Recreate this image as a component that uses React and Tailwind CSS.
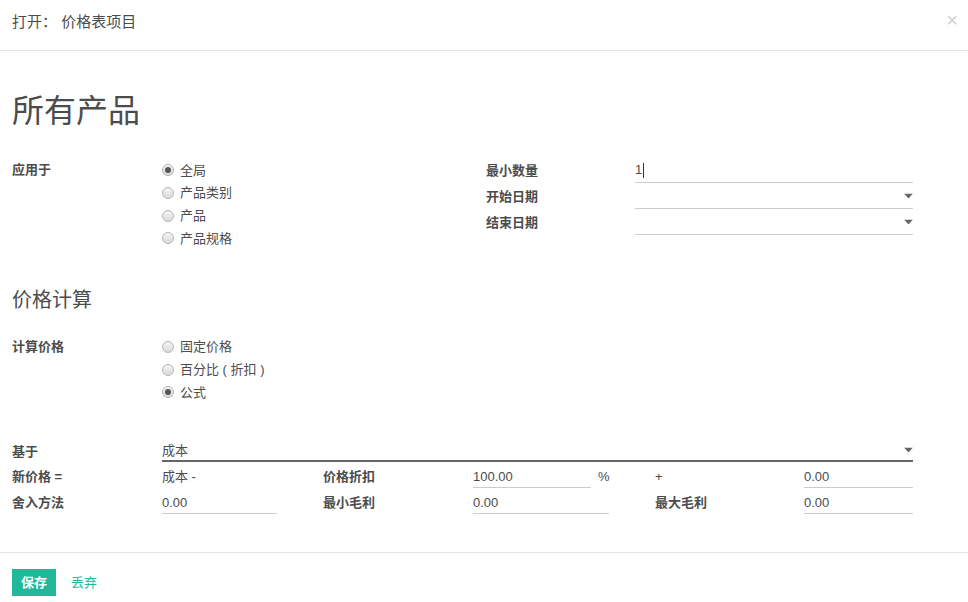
import React from "react";

const FONT = { fontFamily: '"Liberation Sans", "Noto Sans CJK SC", sans-serif' };

function Radio({ checked, label }) {
  return (
    <div className="flex h-[22.7px] items-center">
      <span className="relative flex h-[12px] w-[12px] items-center justify-center rounded-full border border-[#b5b5b5] bg-gradient-to-b from-[#f4f4f4] to-[#d9d9d9]">
        {checked && <span className="h-[6px] w-[6px] rounded-full bg-[#555]" />}
      </span>
      <span className="ml-[6px] text-[13px] text-[#4c4c4c]">{label}</span>
    </div>
  );
}

function Caret() {
  return (
    <svg width="9" height="5" viewBox="0 0 9 5" className="absolute right-[0px] top-1/2 -translate-y-1/2">
      <path d="M0 0 H9 L4.5 5 Z" fill="#666" />
    </svg>
  );
}

function Field({ value, width, caret, children }) {
  return (
    <div className={`relative flex h-[22px] items-center border-b border-[#cccccc] text-[13px] text-[#4c4c4c] ${width}`}>
      {value}
      {children}
      {caret && <Caret />}
    </div>
  );
}

export default function App() {
  return (
    <div className="h-[602px] w-[968px] overflow-hidden bg-white text-[#4c4c4c]" style={FONT}>
      {/* header */}
      <div className="relative flex h-[51px] items-start border-b border-[#e5e5e5] pl-[12px] pt-[13px]">
        <span className="text-[15px] leading-[18px] text-[#4c4c4c]">打开： 价格表项目</span>
        <span className="absolute right-[10px] top-[10px] text-[20px] leading-[20px] text-[#cfcfcf]">×</span>
      </div>

      {/* body */}
      <div className="pl-[12px]">
        <h1 className="mt-[42px] text-[32px] leading-[36px] text-[#4c4c4c]">所有产品</h1>

        {/* group 1 */}
        <div className="mt-[29px] flex">
          <div className="flex w-[474px] pt-[1px]">
            <div className="w-[150px] text-[13px] font-bold leading-[22.7px]">应用于</div>
            <div className="flex flex-col">
              <Radio checked label="全局" />
              <Radio label="产品类别" />
              <Radio label="产品" />
              <Radio label="产品规格" />
            </div>
          </div>
          <div className="flex flex-col">
            {[
              ["最小数量", true, false],
              ["开始日期", false, true],
              ["结束日期", false, true],
            ].map(([l, one, caret]) => (
              <div key={l} className="flex h-[26px] items-start">
                <div className="flex h-[25px] w-[149px] items-center text-[13px] font-bold">{l}</div>
                <div className="relative flex h-[25px] w-[278px] items-center border-b border-[#cccccc] text-[13px]">
                  {one && (
                    <>
                      <span>1</span>
                      <span className="ml-[1px] h-[15px] w-[1px] bg-[#333]" />
                    </>
                  )}
                  {caret && <Caret />}
                </div>
              </div>
            ))}
          </div>
        </div>

        {/* section 2 */}
        <h2 className="mt-[36px] text-[20px] leading-[28px] text-[#4c4c4c]">价格计算</h2>

        <div className="mt-[22px] flex">
          <div className="w-[150px] text-[13px] font-bold leading-[22.7px]">计算价格</div>
          <div className="flex flex-col">
            <Radio label="固定价格" />
            <Radio label="百分比 ( 折扣 )" />
            <Radio checked label="公式" />
          </div>
        </div>

        {/* based on */}
        <div className="mt-[37px] flex">
          <div className="flex h-[21px] w-[150px] items-center text-[13px] font-bold">基于</div>
          <div className="relative flex h-[21px] w-[751px] items-center border-b-2 border-[#666666] text-[13px]">
            成本
            <Caret />
          </div>
        </div>

        {/* formula */}
        <div className="mt-[4px] grid grid-cols-[150px_161px_150px_182px_149px_109px] gap-y-[4px] text-[13px]">
          <div className="flex h-[22px] items-center font-bold">新价格 =</div>
          <div className="flex h-[22px] items-center">成本 -</div>
          <div className="flex h-[22px] items-center font-bold">价格折扣</div>
          <div className="flex h-[22px] items-center">
            <Field value="100.00" width="w-[118px]" />
            <span className="ml-[7px]">%</span>
          </div>
          <div className="flex h-[22px] items-center">+</div>
          <Field value="0.00" width="w-[109px]" />

          <div className="flex h-[22px] items-center font-bold">舍入方法</div>
          <Field value="0.00" width="w-[115px]" />
          <div className="flex h-[22px] items-center font-bold">最小毛利</div>
          <Field value="0.00" width="w-[136px]" />
          <div className="flex h-[22px] items-center font-bold">最大毛利</div>
          <Field value="0.00" width="w-[109px]" />
        </div>
      </div>

      {/* footer */}
      <div className="mt-[38px] border-t border-[#e5e5e5] pl-[12px] pt-[16px]">
        <div className="flex items-center">
          <button className="flex h-[27px] w-[44px] items-center justify-center bg-[#21b799] text-[13px] font-bold text-white">
            保存
          </button>
          <span className="ml-[15px] text-[13px] text-[#21b799]">丢弃</span>
        </div>
      </div>
    </div>
  );
}
